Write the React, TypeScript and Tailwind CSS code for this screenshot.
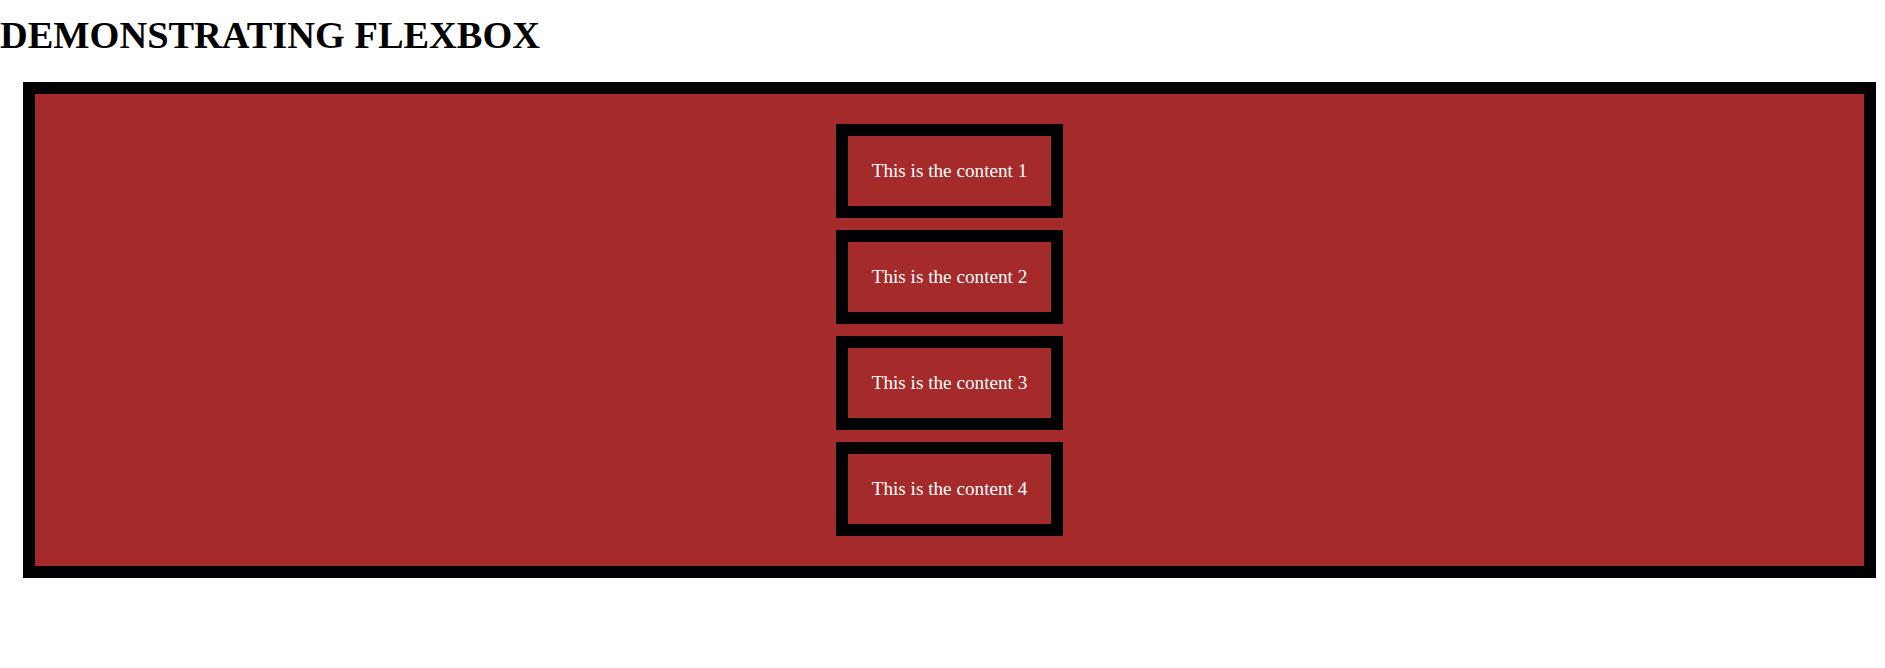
export default function App() {
  const items = [1, 2, 3, 4];
  return (
    <div className="bg-white min-h-[668px]" style={{ fontFamily: '"Liberation Serif", "Times New Roman", serif' }}>
      <h1 className="m-0 pt-[13px] text-[38.4px] leading-[44px] font-bold text-black">DEMONSTRATING FLEXBOX</h1>
      <div className="mt-[25px] ml-[23px] w-[1853px] border-[12px] border-black bg-[#a52a2a] flex flex-col items-center py-[30px] gap-[12px]">
        {items.map((n) => (
          <div key={n} className="w-[227px] h-[94px] border-[12px] border-black flex items-center justify-center text-white text-[19.2px]">
            This is the content {n}
          </div>
        ))}
      </div>
    </div>
  );
}
